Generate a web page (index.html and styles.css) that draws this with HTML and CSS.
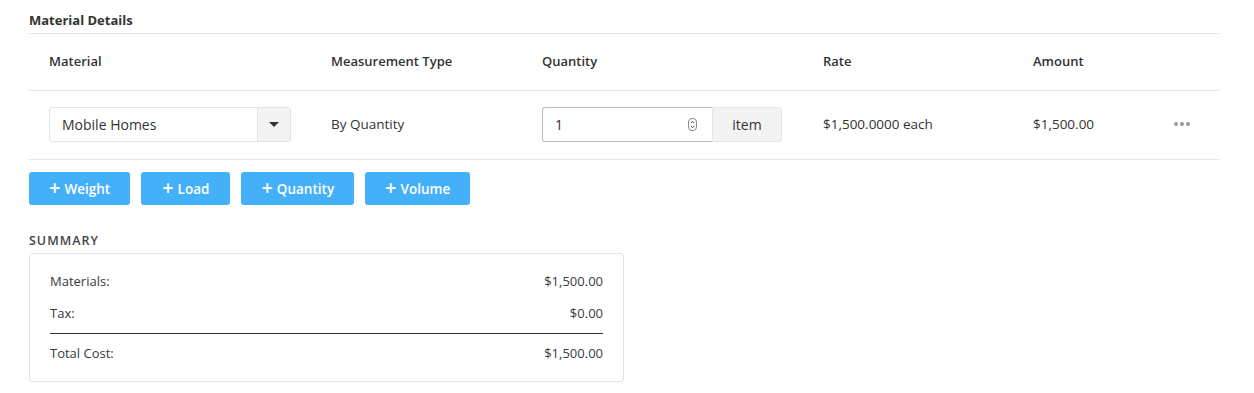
FILE: index.html
```html
<!DOCTYPE html>
<html>
<head>
    <title>Material Details</title>
    <link rel="stylesheet" href="styles.css">
</head>
<body>
    <div class="page">
        <h2 class="section-title">Material Details</h2>

        <div class="materials">
            <div class="mat-row mat-head">
                <div>Material</div>
                <div>Measurement Type</div>
                <div>Quantity</div>
                <div>Rate</div>
                <div>Amount</div>
                <div></div>
            </div>
            <div class="mat-row mat-item">
                <div>
                    <div class="select">
                        <span class="select-value">Mobile Homes</span>
                        <span class="select-caret"><span class="caret"></span></span>
                    </div>
                </div>
                <div>By Quantity</div>
                <div>
                    <div class="qty">
                        <div class="qty-input">
                            <span>1</span>
                            <svg class="spinner" width="9" height="13" viewBox="0 0 9 13">
                                <rect x="0.5" y="0.5" width="8" height="12" rx="3.5" fill="#fff" stroke="#888"/>
                                <path d="M2.8 5 L4.5 3.3 L6.2 5 M2.8 8 L4.5 9.7 L6.2 8" fill="none" stroke="#444" stroke-width="1"/>
                            </svg>
                        </div>
                        <div class="qty-unit">item</div>
                    </div>
                </div>
                <div>$1,500.0000 each</div>
                <div>$1,500.00</div>
                <div class="more"><span></span><span></span><span></span></div>
            </div>
        </div>

        <div class="add-buttons">
            <button class="add-btn"><span class="plus">+</span>Weight</button>
            <button class="add-btn add-load"><span class="plus">+</span>Load</button>
            <button class="add-btn"><span class="plus">+</span>Quantity</button>
            <button class="add-btn"><span class="plus">+</span>Volume</button>
        </div>

        <h3 class="summary-title">SUMMARY</h3>
        <div class="summary">
            <div class="sum-row"><span>Materials:</span><span>$1,500.00</span></div>
            <div class="sum-row"><span>Tax:</span><span>$0.00</span></div>
            <div class="sum-row sum-total"><span>Total Cost:</span><span>$1,500.00</span></div>
        </div>
    </div>
</body>
</html>
```

FILE: styles.css
```css
body { margin: 0; font-family: "Open Sans", Arial, sans-serif; color: #333; background: #fff; }
.page { width: 1190px; padding: 10px 29px; }

.section-title { margin: 0; font-size: 13px; font-weight: 700; line-height: 20px; padding-bottom: 3px; border-bottom: 1px solid #e6e6e6; }

.mat-row { display: grid; grid-template-columns: 282px 211px 281px 210px 140px 1fr; align-items: center; padding-left: 20px; border-bottom: 1px solid #e6e6e6; font-size: 13.5px; box-sizing: border-box; padding-bottom: 2px; }
.mat-head { height: 57px; font-weight: 600; font-size: 13px; }
.mat-item { height: 69px; }

.select { display: flex; width: 242px; height: 35px; border: 1px solid #e3e3e3; border-radius: 3px; box-sizing: border-box; }
.select-value { flex: 1; display: flex; align-items: center; padding-left: 12px; font-size: 14px; }
.select-caret { width: 32px; background: #f3f3f3; border-left: 1px solid #e3e3e3; display: flex; align-items: center; justify-content: center; }
.caret { width: 0; height: 0; border-left: 5px solid transparent; border-right: 5px solid transparent; border-top: 5px solid #333; }

.qty { display: flex; width: 240px; height: 35px; }
.qty-input { flex: 1; display: flex; align-items: center; justify-content: space-between; padding: 0 15px 0 12px; border: 1px solid #bdbdbd; border-right: none; border-radius: 3px 0 0 3px; font-size: 14px; }
.qty-unit { width: 68px; display: flex; align-items: center; justify-content: center; background: #f3f3f3; border: 1px solid #e6e6e6; border-radius: 0 3px 3px 0; font-size: 14px; }

.more { display: flex; gap: 2px; padding-left: 1px; }
.more span { width: 4px; height: 4px; border-radius: 50%; background: #999; }

.add-buttons { display: flex; gap: 11px; margin-top: 12px; }
.add-btn { height: 33px; padding: 0 20px; border: none; border-radius: 3px; background: #45b0fa; color: #fff; font-family: inherit; font-size: 13.5px; font-weight: 600; display: flex; align-items: center; }
.add-load { padding: 0 21px; }
.plus { font-size: 20px; font-weight: 600; margin-right: 4px; line-height: 1; position: relative; top: -1px; }

.summary-title { margin: 27px 0 3px; font-size: 12.5px; font-weight: 600; letter-spacing: 1px; line-height: 18px; color: #444; }
.summary { width: 595px; box-sizing: border-box; border: 1px solid #e3e3e3; border-radius: 3px; padding: 17px 20px 18px; }
.sum-row { display: flex; justify-content: space-between; line-height: 20px; font-size: 13px; font-weight: 400; color: #3a3a3a; }
.sum-row + .sum-row { margin-top: 12px; }
.sum-total { border-top: 1px solid #333; padding-top: 9px; margin-top: 10px !important; }
```
